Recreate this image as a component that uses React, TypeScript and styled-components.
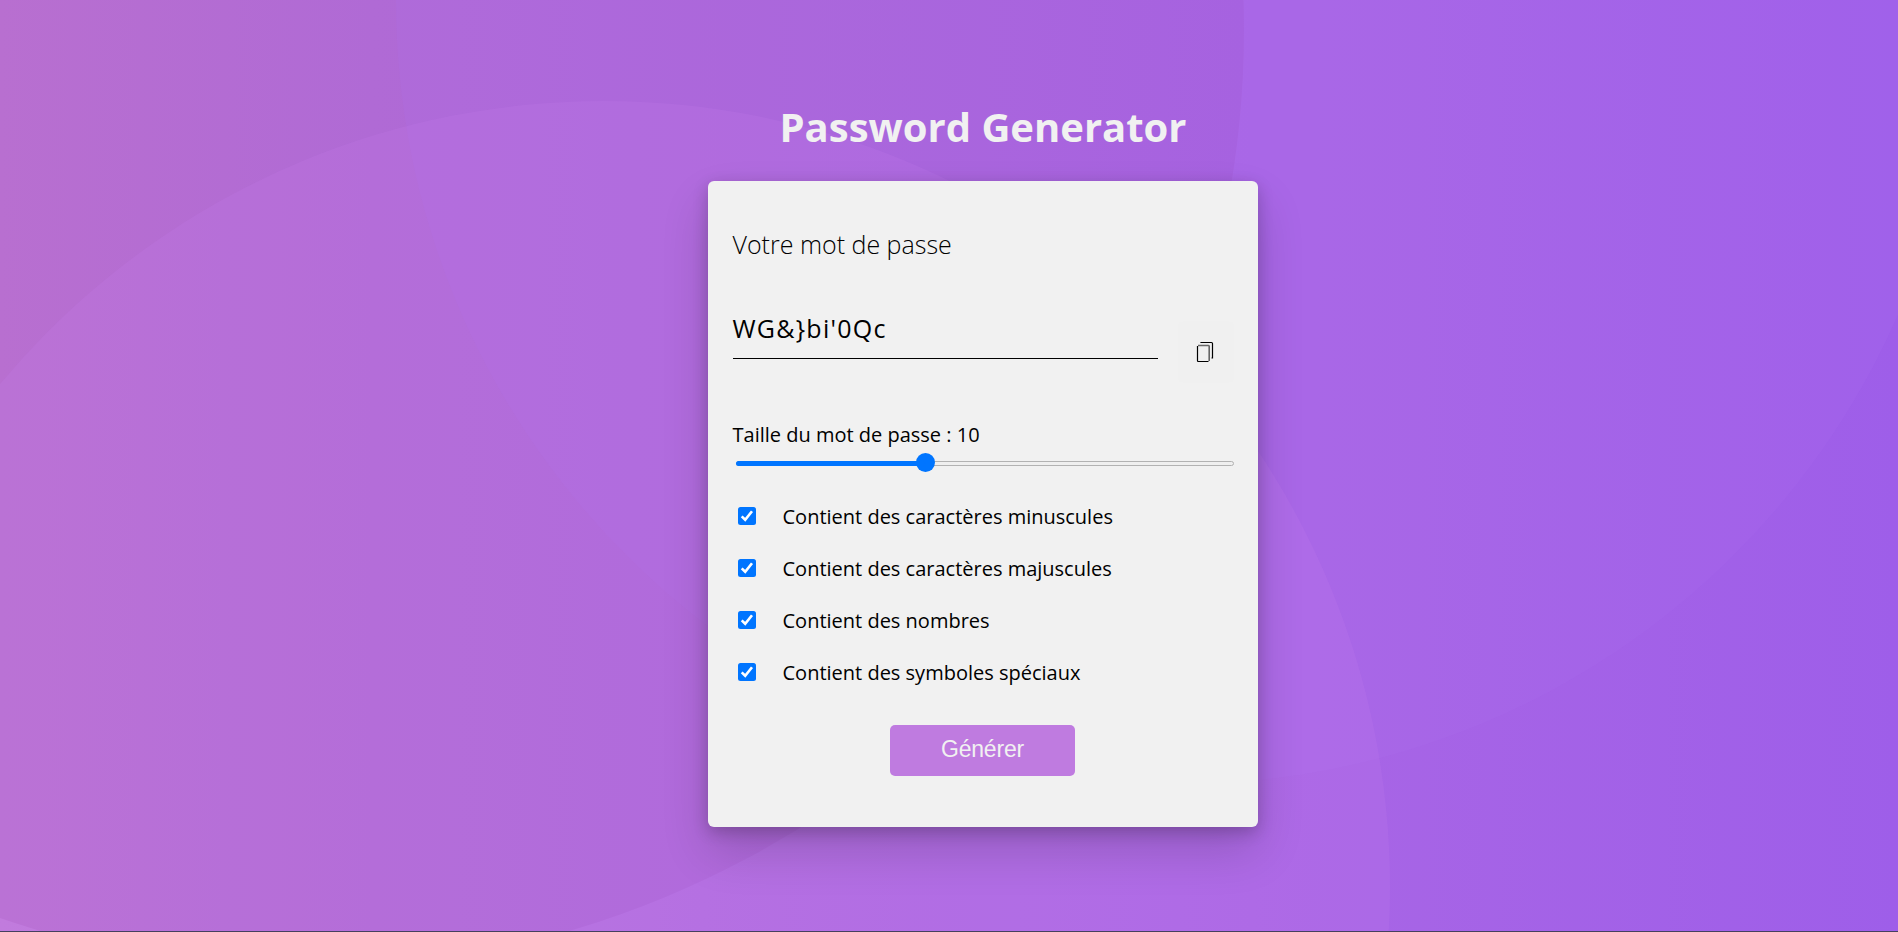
import React, { useState } from 'react';
import styled, { createGlobalStyle } from 'styled-components';

const GlobalStyle = createGlobalStyle`
  *, *::before, *::after { box-sizing: border-box; margin: 0; padding: 0; }
  body { font-family: "Open Sans", sans-serif; color: #000; background: #3c3f5c; }
`;

const Page = styled.main`
  position: relative;
  height: 932px;
  overflow: hidden;
  border-bottom: 1px solid #46405f;
  display: flex;
  flex-direction: column;
  align-items: center;
  padding: 100px 0 0 68px;
`;

const Backdrop = styled.svg`
  position: absolute;
  inset: 0;
  width: 1898px;
  height: 931px;
`;

const Title = styled.h1`
  position: relative;
  height: 81px;
  font-size: 40px;
  line-height: 54px;
  font-weight: 700;
  color: #f1f1f1;
`;

const Card = styled.section`
  position: relative;
  width: 550px;
  height: 646px;
  padding: 46px 25.5px 0 24.5px;
  border-radius: 6px;
  background: #f1f1f1;
  box-shadow: 0 24px 47px rgba(0, 0, 0, 0.16), 0 5px 16px rgba(0, 0, 0, 0.2);
`;

const Heading = styled.h2`
  height: 68px;
  font-size: 25px;
  line-height: 34px;
  font-weight: 300;
`;

const ResultRow = styled.div`
  display: flex;
  justify-content: space-between;
  margin-top: 12px;
`;

const Password = styled.p`
  width: 425px;
  height: 52px;
  border-bottom: 1px solid #000;
  font-size: 25px;
  line-height: 43px;
  letter-spacing: 1.25px;
`;

const CopyButton = styled.button`
  display: grid;
  place-items: center;
  width: 56px;
  height: 62px;
  margin: 14px -1px 0 0;
  padding-right: 2px;
  border: 0;
  border-radius: 6px;
  background: #f0f0f0;
`;

const SizeLabel = styled.label`
  display: block;
  margin-top: 38px;
  font-size: 20px;
  line-height: 28px;
`;

const Slider = styled.input`
  display: block;
  appearance: none;
  width: 498px;
  height: 20px;
  margin: 4px 0 0 3.5px;
  background: transparent;

  &::-webkit-slider-runnable-track {
    height: 5px;
    border: 1px solid #b2b2b2;
    border-radius: 3px;
    background: #efefef;
  }
  &::-webkit-slider-thumb {
    appearance: none;
    width: 19px;
    height: 19px;
    margin-top: -8.5px;
    border-radius: 50%;
    background: #0075ff;
    box-shadow: none;
  }
`;

const SliderBox = styled.div<{ $fill: number }>`
  position: relative;
  &::before {
    content: "";
    position: absolute;
    left: 3.5px;
    top: 8px;
    width: ${(p) => p.$fill}px;
    height: 5px;
    border-radius: 3px;
    background: #0075ff;
    z-index: 1;
    pointer-events: none;
  }
`;

const Options = styled.ul`
  display: grid;
  gap: 24px;
  margin-top: 29px;
  list-style: none;
`;

const Option = styled.li`
  display: flex;
  align-items: center;
  height: 28px;
  padding-left: 5px;
  gap: 27px;
  font-size: 20px;
`;

const Check = styled.svg`
  width: 18px;
  height: 18px;
  display: block;
`;

const Generate = styled.button`
  display: block;
  width: 185px;
  height: 51px;
  margin: 39px auto 0;
  padding-bottom: 2px;
  border: 0;
  border-radius: 5px;
  background: #bf7be0;
  color: #f1f1f1;
  font: 23px "Liberation Sans", Arial, sans-serif;
  letter-spacing: -0.2px;
`;

const options = [
  'Contient des caractères minuscules',
  'Contient des caractères majuscules',
  'Contient des nombres',
  'Contient des symboles spéciaux',
];

export default function App() {
  const [size, setSize] = useState(10);
  return (
    <Page>
      <GlobalStyle />
      <Backdrop viewBox="0 0 1898 931" aria-hidden="true">
        <defs>
          <linearGradient id="base" gradientUnits="userSpaceOnUse" x1="0" x2="1898">
            <stop offset="0" stopColor="#c07ada" />
            <stop offset="0.37" stopColor="#b16de0" />
            <stop offset="0.66" stopColor="#a966e5" />
            <stop offset="1" stopColor="#9e5ee9" />
          </linearGradient>
          <linearGradient id="rose" gradientUnits="userSpaceOnUse" x1="0" x2="1244">
            <stop offset="0" stopColor="#b86fd0" />
            <stop offset="0.3" stopColor="#b06ad5" />
            <stop offset="1" stopColor="#a560dd" />
          </linearGradient>
        </defs>
        <rect width="1898" height="931" fill="url(#base)" />
        <circle cx="305" cy="30" r="939" fill="url(#rose)" />
        <circle cx="1180" cy="0" r="784" fill="#b070f2" fillOpacity="0.15" />
        <circle cx="604" cy="887" r="786" fill="#c880f0" fillOpacity="0.18" />
      </Backdrop>
      <Title>Password Generator</Title>
      <Card>
        <Heading>Votre mot de passe</Heading>
        <ResultRow>
          <Password>{"WG&}bi'0Qc"}</Password>
          <CopyButton aria-label="Copier">
            <svg width="18" height="22" viewBox="0 0 18 22" fill="none" stroke="#000" strokeWidth="1.2">
              <path d="M5 2V1.5H15.5Q16.5 1.5 16.5 2.5V17H15.5" />
              <path d="M2 4.5H12.5Q13.2 4.5 13.2 5.3V20" stroke="#666" strokeWidth="1.6" />
              <path d="M1.5 5V19.8Q1.5 20.5 2.2 20.5H12.5" />
            </svg>
          </CopyButton>
        </ResultRow>
        <SizeLabel htmlFor="size">Taille du mot de passe : {size}</SizeLabel>
        <SliderBox $fill={10 + ((size - 1) / 24) * 478}>
          <Slider id="size" type="range" min={1} max={25} value={size} onChange={(e) => setSize(Number(e.target.value))} />
        </SliderBox>
        <Options>
          {options.map((text) => (
            <Option key={text}>
              <Check viewBox="0 0 18 18">
                <rect width="18" height="18" rx="2.5" fill="#0075ff" />
                <path d="M3.7 9.4L7.2 12.8L14 4.2" fill="none" stroke="#fff" strokeWidth="2.6" />
              </Check>
              <span>{text}</span>
            </Option>
          ))}
        </Options>
        <Generate>Générer</Generate>
      </Card>
    </Page>
  );
}
